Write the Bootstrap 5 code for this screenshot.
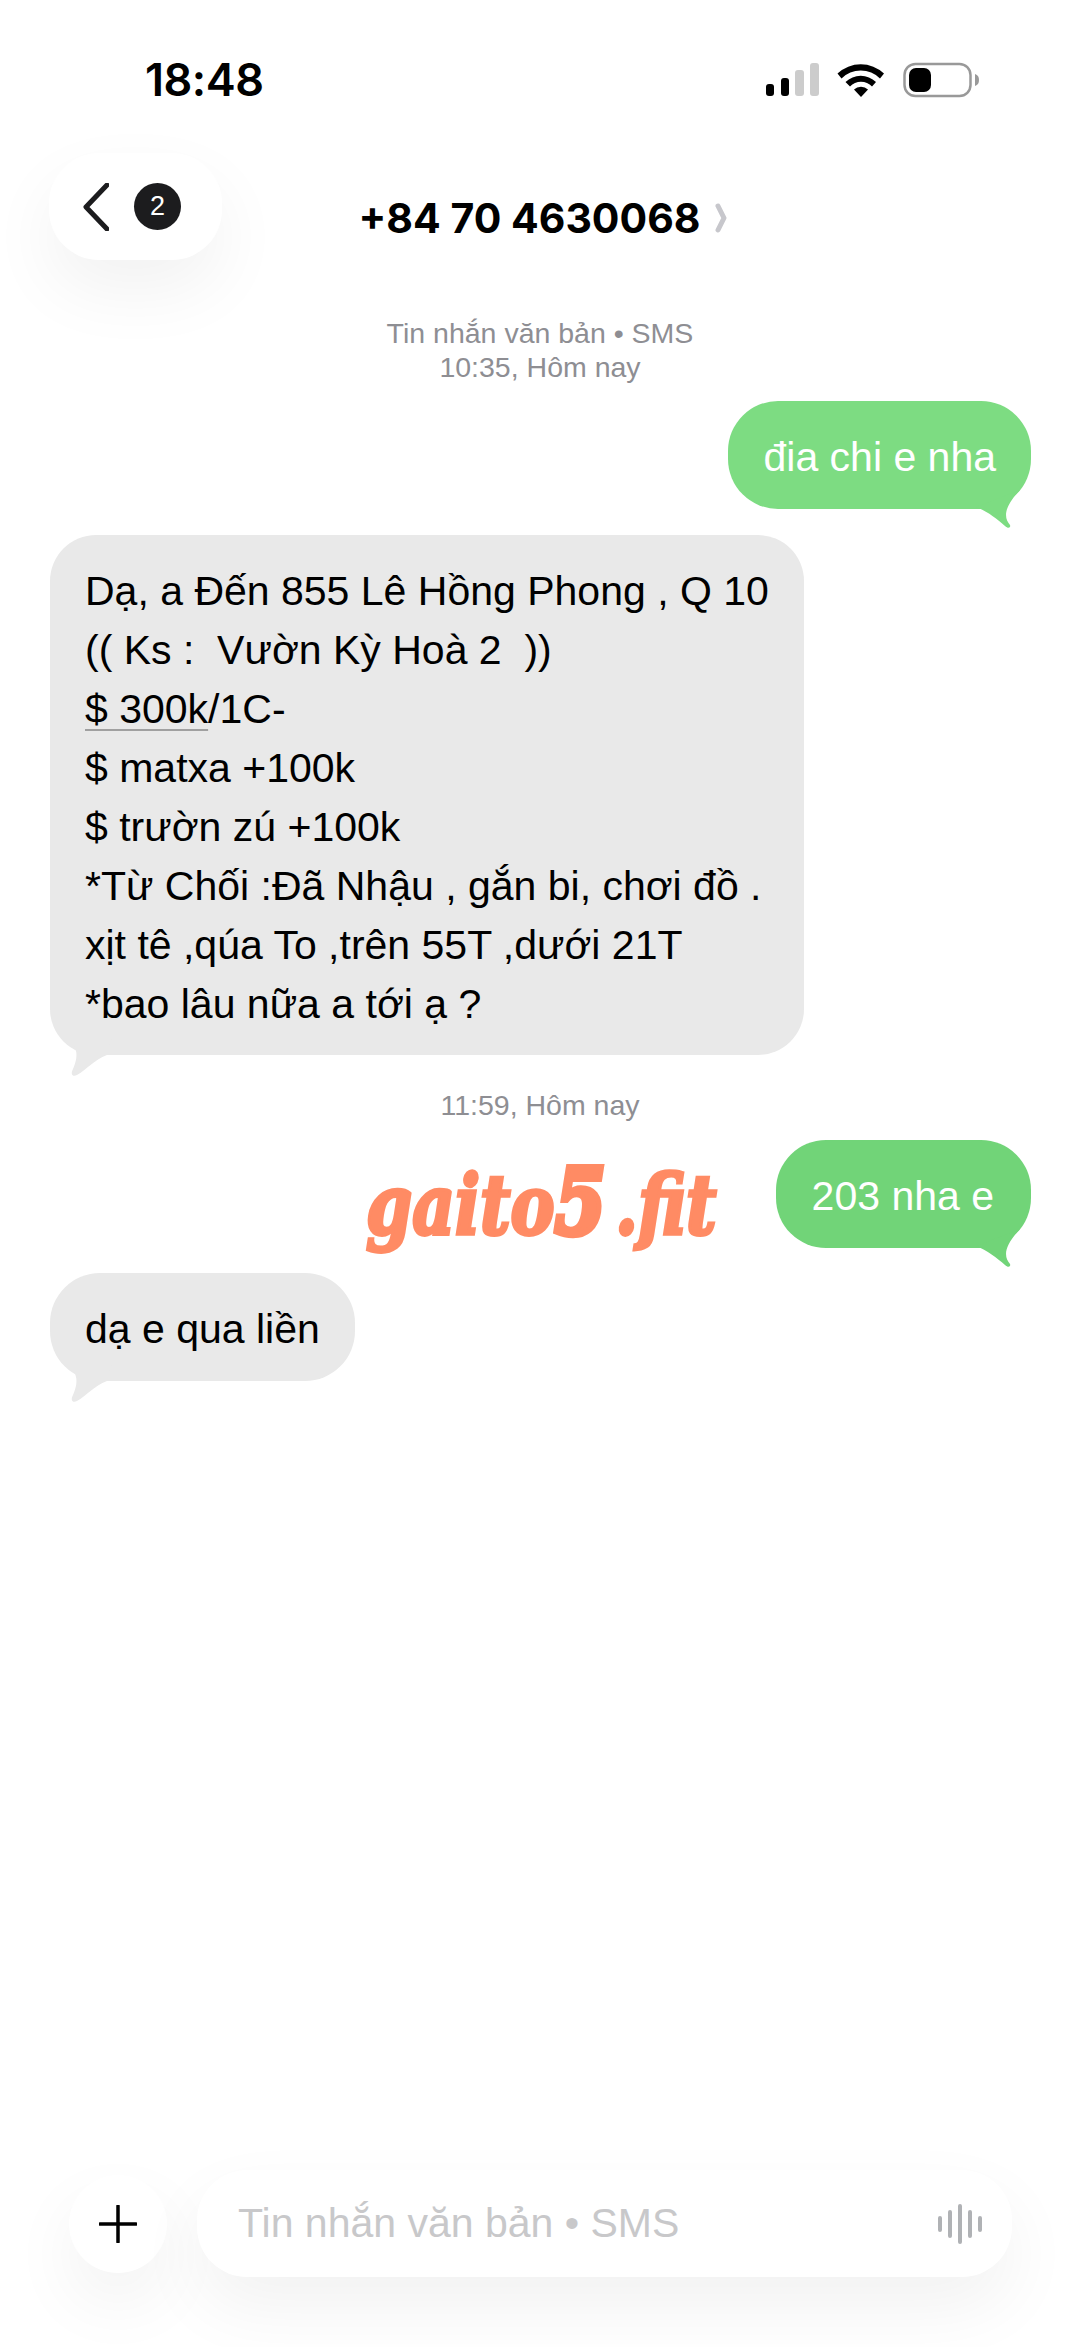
<!DOCTYPE html>
<html lang="vi">
<head>
  <meta charset="UTF-8">
  <title>+84 70 4630068</title>
  <link href="https://cdn.jsdelivr.net/npm/bootstrap@5.3.0/dist/css/bootstrap.min.css" rel="stylesheet">
  <style>
    body { background: #fff; color: #000; font-family: "Liberation Sans", Arial, sans-serif; }
    .phone-page { width: 1080px; height: 2347px; }
    .status-row { padding: 55px 100px 0 145px; height: 105px; }
    .status-row svg { margin-top: 7px; }
    .status-time { font-family: Inter, "Liberation Sans", sans-serif; font-size: 45px; font-weight: 600; line-height: 50px; letter-spacing: -.5px; }
    .header-row { margin-top: 48px; padding: 0 49px; height: 107px; }
    .back-pill { width: 173px; height: 107px; border-radius: 50px; background: #fff; box-shadow: 0 30px 70px rgba(0,0,0,.055); padding-left: 34px; gap: 25px; }
    .back-count { width: 47px; height: 47px; background: #1c1c1e; color: #fff; font-size: 27px; border-radius: 50%; }
    .thread-title { position: absolute; left: 0; right: 0; top: 198px; padding-left: 6px; font-family: Inter, "Liberation Sans", sans-serif; font-size: 41px; font-weight: 700; line-height: 40px; gap: 15px; }
    .meta-line { color: #8e8e93; font-size: 28.5px; line-height: 34px; text-align: center; }
    .bubble { position: relative; font-size: 41px; line-height: 59px; padding: 27px 35px 22px; border-radius: 50px; white-space: nowrap; }
    .bubble svg { position: absolute; }
    .bubble-in { background: #e9e9e9; color: #000; align-self: flex-start; margin-left: 50px; }
    .bubble-in.long-msg { padding-bottom: 21px; border-radius: 46px; }
    .bubble-in svg { left: 14px; bottom: -23px; fill: #e9e9e9; }
    .bubble-out { color: #fff; align-self: flex-end; margin-right: 49px; }
    .bubble-out svg { right: 0; bottom: -23px; }
    .green-a { background: #7ddc82; }
    .green-a svg { fill: #7ddc82; }
    .green-b { background: #71d478; padding-left: 36px; padding-right: 37px; }
    .green-b svg { fill: #71d478; }
    .detected { text-decoration: underline; text-decoration-color: #a0a0a0; text-decoration-thickness: 2px; text-underline-offset: 6px; }
    .gap-a { margin-top: 17px; }
    .gap-b { margin-top: 26px; }
    .gap-c { margin-top: 33px; }
    .gap-d { margin-top: 18px; }
    .gap-e { margin-top: 25px; }
    .meta-top { margin-top: 56px; }
    .watermark { position: absolute; left: 366px; top: 1152px; color: #ff8b64; font-family: "DejaVu Serif", serif; font-style: italic; font-weight: 700; font-size: 66px; line-height: 100px; letter-spacing: 0; -webkit-text-stroke: 3px #ff8b64; white-space: nowrap; transform: scaleY(1.25); word-spacing: -14px; }
    .watermark-five { font-size: 74px; -webkit-text-stroke: 5px #ff8b64; }
    .composer { padding: 0 68px 70px 69px; gap: 30px; }
    .plus-btn { width: 98px; height: 98px; border-radius: 50%; background: #fff; box-shadow: 0 30px 70px rgba(0,0,0,.055); }
    .compose-input { height: 107px; border-radius: 50px; background: #fff; box-shadow: 0 30px 70px rgba(0,0,0,.055); padding: 0 29px 0 41px; color: #c8c8ca; font-size: 41px; }
  </style>
</head>
<body>
  <div class="phone-page position-relative d-flex flex-column">

    <!-- barra de estado -->
    <div class="status-row d-flex justify-content-between align-items-start">
      <span class="status-time">18:48</span>
      <svg width="214" height="36" viewBox="0 0 214 36">
        <rect x="0" y="22" width="8" height="12" rx="3" fill="#000"/>
        <rect x="15" y="16" width="8" height="18" rx="3" fill="#000"/>
        <rect x="29" y="8" width="9" height="26" rx="3" fill="#ccc"/>
        <rect x="44" y="1" width="9" height="33" rx="3" fill="#ccc"/>
        <g transform="translate(71 0)">
          <path d="M0.5 11.5A34 34 0 0 1 47 11.5L43 16.5A27 27 0 0 0 4.5 16.5Z"/>
          <path d="M8.5 20A22 22 0 0 1 39 20L35 24.5A15 15 0 0 0 13 24.5Z"/>
          <path d="M17 27.5A10 10 0 0 1 31 27.5L24 35Z"/>
        </g>
        <rect x="138.500" y="2" width="66" height="32" rx="11" fill="#fff" stroke="#999" stroke-width="2.500"/>
        <rect x="143" y="6" width="22" height="24" rx="7" fill="#000"/>
        <path d="M209 12C212 13 213 15 213 18S212 23 209 24Z" fill="#999"/>
      </svg>
    </div>

    <!-- cabecera -->
    <div class="header-row d-flex">
      <div class="back-pill d-flex align-items-center">
        <svg width="26" height="48" viewBox="0 0 26 48"><path d="M24 2L3 24L24 46" fill="none" stroke="#1c1c1e" stroke-width="5" stroke-linecap="round" stroke-linejoin="round"/></svg>
        <span class="back-count d-flex align-items-center justify-content-center">2</span>
      </div>
    </div>
    <div class="thread-title d-flex justify-content-center align-items-center">
      <span>+84 70 4630068</span>
      <svg width="12" height="30" viewBox="0 0 12 30"><path d="M3 3L9 15L3 27" fill="none" stroke="#c7c7cc" stroke-width="5" stroke-linecap="round" stroke-linejoin="round"/></svg>
    </div>

    <!-- mensajes -->
    <div class="d-flex flex-column">
      <div class="meta-line meta-top">Tin nhắn văn bản • SMS<br>10:35, Hôm nay</div>

      <div class="bubble bubble-out green-a gap-a">đia chi e nha
        <svg width="60" height="42" viewBox="0 0 60 42"><path d="M5 17C16 21 26 29 34 36C37 39 40 38 39 35C33 28 32 18 49 0Z"/></svg>
      </div>

      <div class="bubble bubble-in long-msg gap-b">Dạ, a Đến 855 Lê Hồng Phong , Q 10<br>(( Ks :&nbsp; Vườn Kỳ Hoà 2&nbsp; ))<br><span class="detected">$ 300k</span>/1C-<br>$ matxa +100k<br>$ trườn zú +100k<br>*Từ Chối :Đã Nhậu , gắn bi, chơi đồ .<br>xịt tê ,qúa To ,trên 55T ,dưới 21T<br>*bao lâu nữa a tới ạ ?
        <svg width="50" height="44" viewBox="0 0 50 44"><path d="M2 4C12 10 16 20 9 35C6 41 9 43 13 41C22 36 30 26 43 21L48 3Z"/></svg>
      </div>

      <div class="meta-line gap-c">11:59, Hôm nay</div>

      <div class="bubble bubble-out green-b gap-d">203 nha e
        <svg width="60" height="42" viewBox="0 0 60 42"><path d="M5 17C16 21 26 29 34 36C37 39 40 38 39 35C33 28 32 18 49 0Z"/></svg>
      </div>

      <div class="bubble bubble-in gap-e">dạ e qua liền
        <svg width="50" height="44" viewBox="0 0 50 44"><path d="M2 4C12 10 16 20 9 35C6 41 9 43 13 41C22 36 30 26 43 21L48 3Z"/></svg>
      </div>
    </div>

    <div class="watermark">gaito<span class="watermark-five">5</span> .fit</div>

    <!-- barra de escritura -->
    <div class="composer d-flex align-items-center mt-auto">
      <div class="plus-btn d-flex align-items-center justify-content-center flex-shrink-0">
        <svg width="38" height="38" viewBox="0 0 38 38"><path d="M19 1V37M1 19H37" stroke="#000" stroke-width="3.500" stroke-linecap="round"/></svg>
      </div>
      <div class="compose-input flex-grow-1 d-flex align-items-center justify-content-between">
        <span>Tin nhắn văn bản • SMS</span>
        <svg width="46" height="40" viewBox="0 0 46 40" stroke="#b0b2b5" stroke-width="4" stroke-linecap="round"><path d="M3 14V26M13 8V32M23 2V38M33 8V32M43 14V26"/></svg>
      </div>
    </div>
  </div>

  <script src="https://cdn.jsdelivr.net/npm/bootstrap@5.3.0/dist/js/bootstrap.bundle.min.js"></script>
</body>
</html>
